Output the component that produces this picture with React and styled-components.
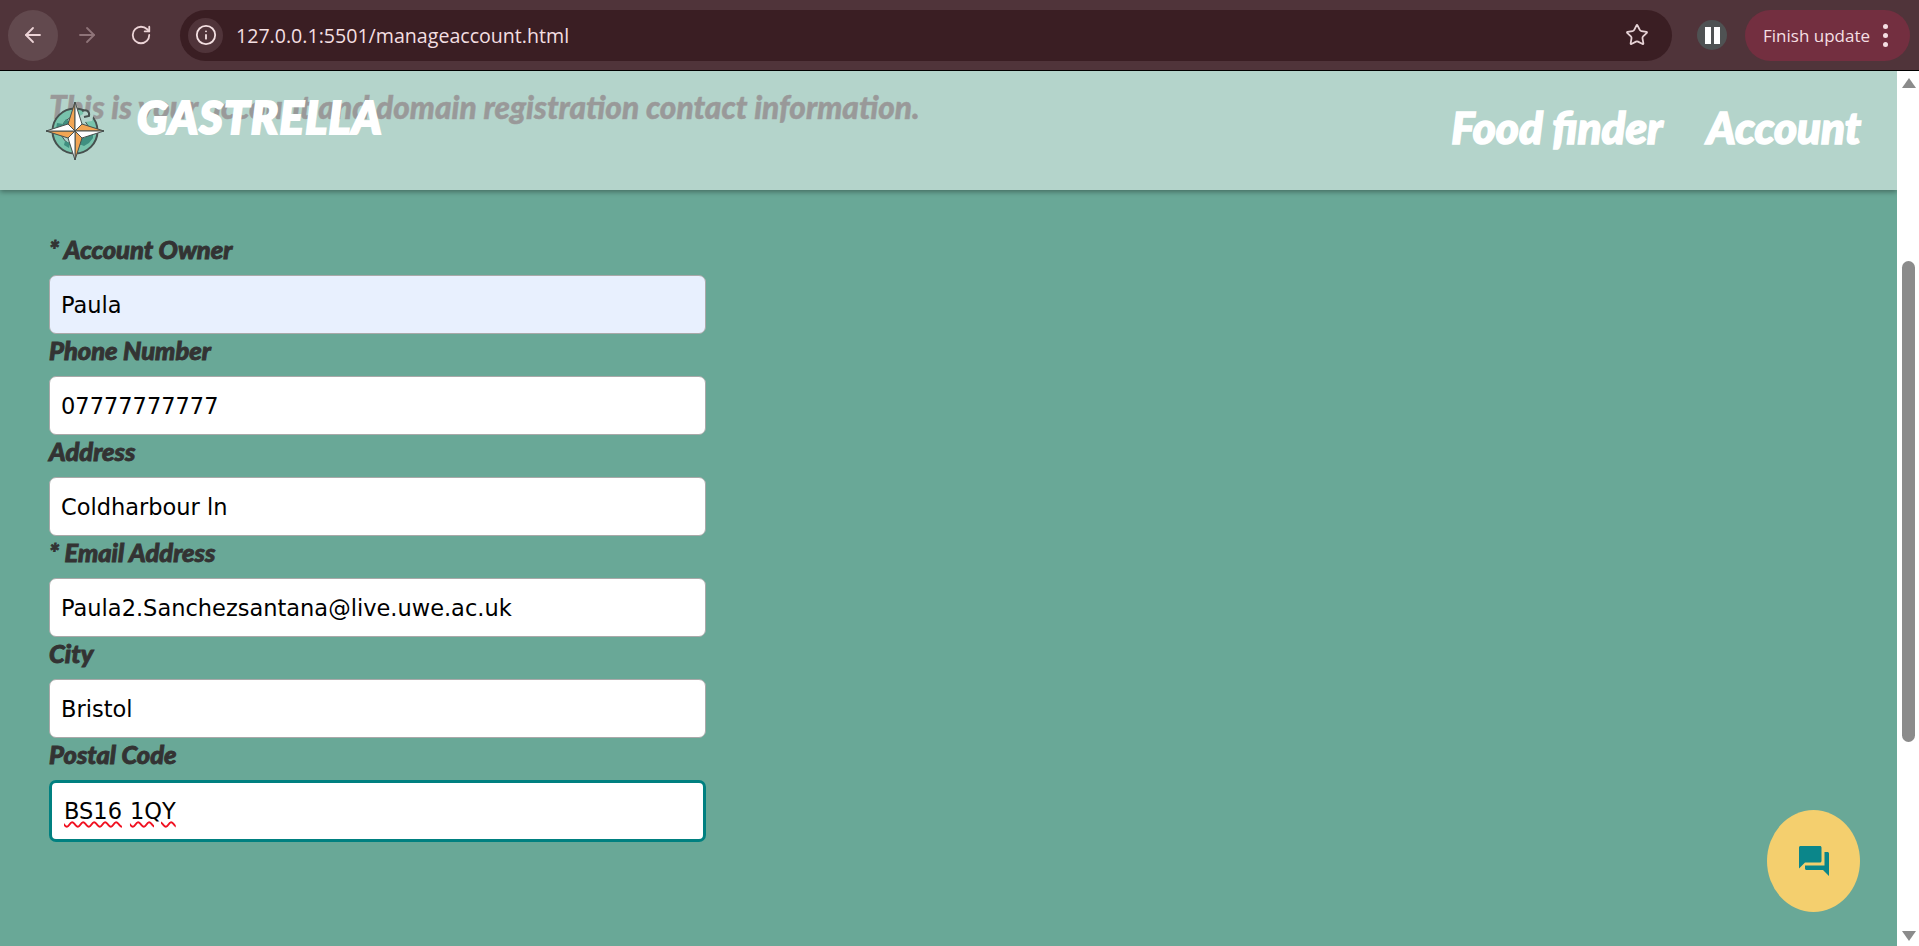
import React from 'react';
import styled, { createGlobalStyle } from 'styled-components';
import { ArrowLeft, ArrowRight, RotateCw, Info, Star } from 'lucide-react';

const GlobalStyle = createGlobalStyle`
  html, body {
    margin: 0;
    height: 100%;
    overflow: hidden;
    background: #69a897;
  }
`;

const DISPLAY_FONT = `Lato, "Open Sans", sans-serif`;
const UI_FONT = `"Open Sans", "Noto Sans", sans-serif`;

const Window = styled.div`
  width: 1919px;
  height: 946px;
  display: flex;
  flex-direction: column;
  overflow: hidden;
`;

// browser toolbar
const Toolbar = styled.div`
  height: 70px;
  flex: none;
  display: flex;
  align-items: center;
  padding-left: 8px;
  padding-right: 9px;
  background: #50343a;
  border-bottom: 1px solid #000;
`;

const NavButton = styled.div`
  width: 50px;
  height: 51px;
  margin-right: 4px;
  border-radius: 50%;
  display: flex;
  align-items: center;
  justify-content: center;
  color: ${p => (p.$dim ? '#8f7479' : '#ecd3d6')};
  background: ${p => (p.$active ? '#62494e' : 'transparent')};
`;

const Omnibox = styled.div`
  width: 1492px;
  height: 51px;
  margin-left: 10px;
  padding: 0 23px 0 8px;
  box-sizing: border-box;
  border-radius: 26px;
  background: #3a1e23;
  display: flex;
  align-items: center;
`;

const SiteInfo = styled.div`
  width: 35px;
  height: 35px;
  border-radius: 50%;
  background: #50343a;
  color: #f3dfe1;
  display: flex;
  align-items: center;
  justify-content: center;
`;

const Url = styled.div`
  flex: 1;
  margin-left: 13px;
  font: 400 19.6px ${UI_FONT};
  color: #f3dfe1;
`;

const PauseBadge = styled.div`
  width: 30px;
  height: 30px;
  margin-left: 25px;
  border-radius: 50%;
  background: #4f5253;
  display: flex;
  align-items: center;
  justify-content: center;
  gap: 3px;
`;

const PauseBar = styled.span`
  width: 6px;
  height: 17px;
  background: #fff;
`;

const UpdatePill = styled.div`
  width: 165px;
  height: 51px;
  margin-left: 18px;
  padding-left: 18px;
  box-sizing: border-box;
  border-radius: 26px;
  background: #732f40;
  color: #f5dfe3;
  display: flex;
  align-items: center;
  white-space: nowrap;
  font: 400 17px ${UI_FONT};
`;

const KebabDots = styled.span`
  margin-left: 13px;
  display: flex;
  flex-direction: column;
  gap: 4px;
`;

const KebabDot = styled.i`
  display: block;
  width: 5px;
  height: 5px;
  border-radius: 50%;
  background: #f5dfe3;
`;

// page area
const Viewport = styled.div`
  flex: 1;
  min-height: 0;
  display: flex;
`;

const Page = styled.main`
  flex: 1;
  position: relative;
  overflow: hidden;
  background: #69a897;
  padding: 0 49px;
`;

const Intro = styled.p`
  margin: 20px 0 0;
  font: italic 900 31.6px/32px ${DISPLAY_FONT};
  color: #333;
  white-space: nowrap;
  -webkit-text-stroke: 0.5px #333;
`;

const SiteHeader = styled.header`
  position: absolute;
  top: 0;
  left: 0;
  right: 0;
  height: 119px;
  background: rgba(255, 255, 255, 0.5);
  box-shadow: 0 2px 5px rgba(0, 0, 0, 0.35);
  display: flex;
  align-items: flex-start;
  padding: 0 36px 0 46px;
`;

const Logo = styled.svg`
  width: 58px;
  height: 58px;
  margin-top: 31px;
  flex: none;
`;

const Brand = styled.div`
  margin: 22px 0 0 33px;
  font: italic 900 45px/48px ${DISPLAY_FONT};
  letter-spacing: 1.5px;
  color: #fff;
  -webkit-text-stroke: 2.2px #fff;
`;

const Nav = styled.nav`
  margin: 31px 0 0 auto;
  display: flex;
  gap: 44px;
`;

const NavLink = styled.a`
  font: italic 900 44px/50px ${DISPLAY_FONT};
  color: #fff;
  -webkit-text-stroke: 1.6px #fff;
`;

const Form = styled.form`
  width: 657px;
  margin-top: 110px;
  display: flex;
  flex-direction: column;
`;

const Label = styled.label`
  height: 42px;
  padding-bottom: 10px;
  box-sizing: border-box;
  display: flex;
  align-items: center;
  font: italic 900 25.5px/26px ${DISPLAY_FONT};
  color: #333;
  -webkit-text-stroke: 0.9px #333;
`;

const Input = styled.input`
  display: block;
  width: 100%;
  height: 59px;
  padding: 0 11px;
  box-sizing: border-box;
  border: 1px solid #a9a9a9;
  border-radius: 7px;
  outline: none;
  font: 400 22.5px "DejaVu Sans", Verdana, sans-serif;
  color: #000;
  background: ${p => (p.$autofilled ? '#e8f0fe' : '#fff')};
`;

// focused field, drawn with the spell check underline it has in the browser
const FocusedInput = styled.div`
  height: 62px;
  padding: 0 12px;
  box-sizing: border-box;
  border: 3px solid #008080;
  border-radius: 7px;
  display: flex;
  align-items: center;
  gap: 8px;
  font: 400 22.5px "DejaVu Sans", Verdana, sans-serif;
  color: #000;
  background: #fff;
`;

const Misspelled = styled.span`
  text-decoration: underline wavy #f01020 1.5px;
  text-underline-offset: 2px;
`;

const ChatButton = styled.button`
  position: absolute;
  right: 37px;
  bottom: 34px;
  width: 93px;
  height: 102px;
  padding: 0;
  border: 0;
  border-radius: 50%;
  background: #f4cf6e;
  display: flex;
  align-items: center;
  justify-content: center;
`;

// scrollbar drawn by hand, the page itself does not scroll
const ScrollTrack = styled.div`
  width: 22px;
  flex: none;
  background: #fff;
  display: flex;
  flex-direction: column;
  align-items: center;
`;

const ScrollArrow = styled.span`
  width: 0;
  height: 0;
  margin-top: ${p => p.$top}px;
  margin-left: 1px;
  border-left: 7px solid transparent;
  border-right: 7px solid transparent;
  ${p => (p.$down ? 'border-top: 10px solid #8b8b8b;' : 'border-bottom: 10px solid #8b8b8b;')}
`;

const ScrollThumb = styled.div`
  width: 13px;
  height: 481px;
  margin-top: 173px;
  margin-left: 1px;
  border-radius: 7px;
  background: #8b8b8b;
`;

const fields = [
  { label: '* Account Owner', value: 'Paula', autofilled: true },
  { label: 'Phone Number', value: '07777777777' },
  { label: 'Address', value: 'Coldharbour ln' },
  { label: '* Email Address', value: 'Paula2.Sanchezsantana@live.uwe.ac.uk' },
  { label: 'City', value: 'Bristol' },
];

function CompassLogo() {
  return (
    <Logo viewBox="0 0 58 58">
      <circle cx="29" cy="29" r="22.5" fill="#78c3ac" stroke="#46504e" strokeWidth="2" />
      <circle cx="29" cy="29" r="14" fill="#b3d3ca" stroke="#46504e" strokeWidth="1" />
      <path d="M11 21l6 1 3-5 4 3-3 6-5 1-2 5-4-5zM47 31l-6 0-2 5-5 0-1 6 5 2 5-3 4-5zM19 39l5 2-1 5-5-3z" fill="#3f8f80" />
      <path d="M38 7l10 4-2 8-7 1-3 4-4-9 5-3z" fill="#b3d3ca" />
      <path d="M36 9c4-2 8 0 7 5l-5 1" fill="none" stroke="#46504e" strokeWidth="2" />
      <g stroke="#46504e" strokeWidth="1" strokeLinejoin="round">
        <path d="M29 29l-7-7 7-22z" fill="#f2a553" />
        <path d="M29 29l7-7L29 0z" fill="#fff" />
        <path d="M29 29l7-7 22 7z" fill="#f2a553" />
        <path d="M29 29l7 7 22-7z" fill="#fff" />
        <path d="M29 29l7 7-7 22z" fill="#f2a553" />
        <path d="M29 29l-7 7 7 22z" fill="#fff" />
        <path d="M29 29l-7 7L0 29z" fill="#f2a553" />
        <path d="M29 29l-7-7L0 29z" fill="#fff" />
      </g>
    </Logo>
  );
}

function App() {
  return (
    <Window>
      <GlobalStyle />
      <Toolbar>
        <NavButton $active><ArrowLeft size={24} strokeWidth={1.8} /></NavButton>
        <NavButton $dim><ArrowRight size={24} strokeWidth={1.8} /></NavButton>
        <NavButton><RotateCw size={22} strokeWidth={2} /></NavButton>
        <Omnibox>
          <SiteInfo><Info size={22} strokeWidth={2} /></SiteInfo>
          <Url>127.0.0.1:5501/manageaccount.html</Url>
          <Star size={24} strokeWidth={1.8} color="#e6d2d5" />
        </Omnibox>
        <PauseBadge><PauseBar /><PauseBar /></PauseBadge>
        <UpdatePill>
          Finish update
          <KebabDots><KebabDot /><KebabDot /><KebabDot /></KebabDots>
        </UpdatePill>
      </Toolbar>
      <Viewport>
        <Page>
          <Intro>This is your account and domain registration contact information.</Intro>
          <Form>
            {fields.map(f => (
              <React.Fragment key={f.label}>
                <Label>{f.label}</Label>
                <Input readOnly value={f.value} $autofilled={f.autofilled} />
              </React.Fragment>
            ))}
            <Label>Postal Code</Label>
            <FocusedInput>
              <Misspelled>BS16</Misspelled>
              <Misspelled>1QY</Misspelled>
            </FocusedInput>
          </Form>
          <SiteHeader>
            <CompassLogo />
            <Brand>GASTRELLA</Brand>
            <Nav>
              <NavLink>Food finder</NavLink>
              <NavLink>Account</NavLink>
            </Nav>
          </SiteHeader>
          <ChatButton>
            <svg width="36" height="36" viewBox="0 0 24 24" fill="#0b868a">
              <path d="M21 6h-2v9H6v2c0 .55.45 1 1 1h11l4 4V7c0-.55-.45-1-1-1zm-4 6V3c0-.55-.45-1-1-1H3c-.55 0-1 .45-1 1v14l4-4h10c.55 0 1-.45 1-1z" />
            </svg>
          </ChatButton>
        </Page>
        <ScrollTrack>
          <ScrollArrow $top={7} />
          <ScrollThumb />
          <ScrollArrow $down $top={189} />
        </ScrollTrack>
      </Viewport>
    </Window>
  );
}

export default App;
